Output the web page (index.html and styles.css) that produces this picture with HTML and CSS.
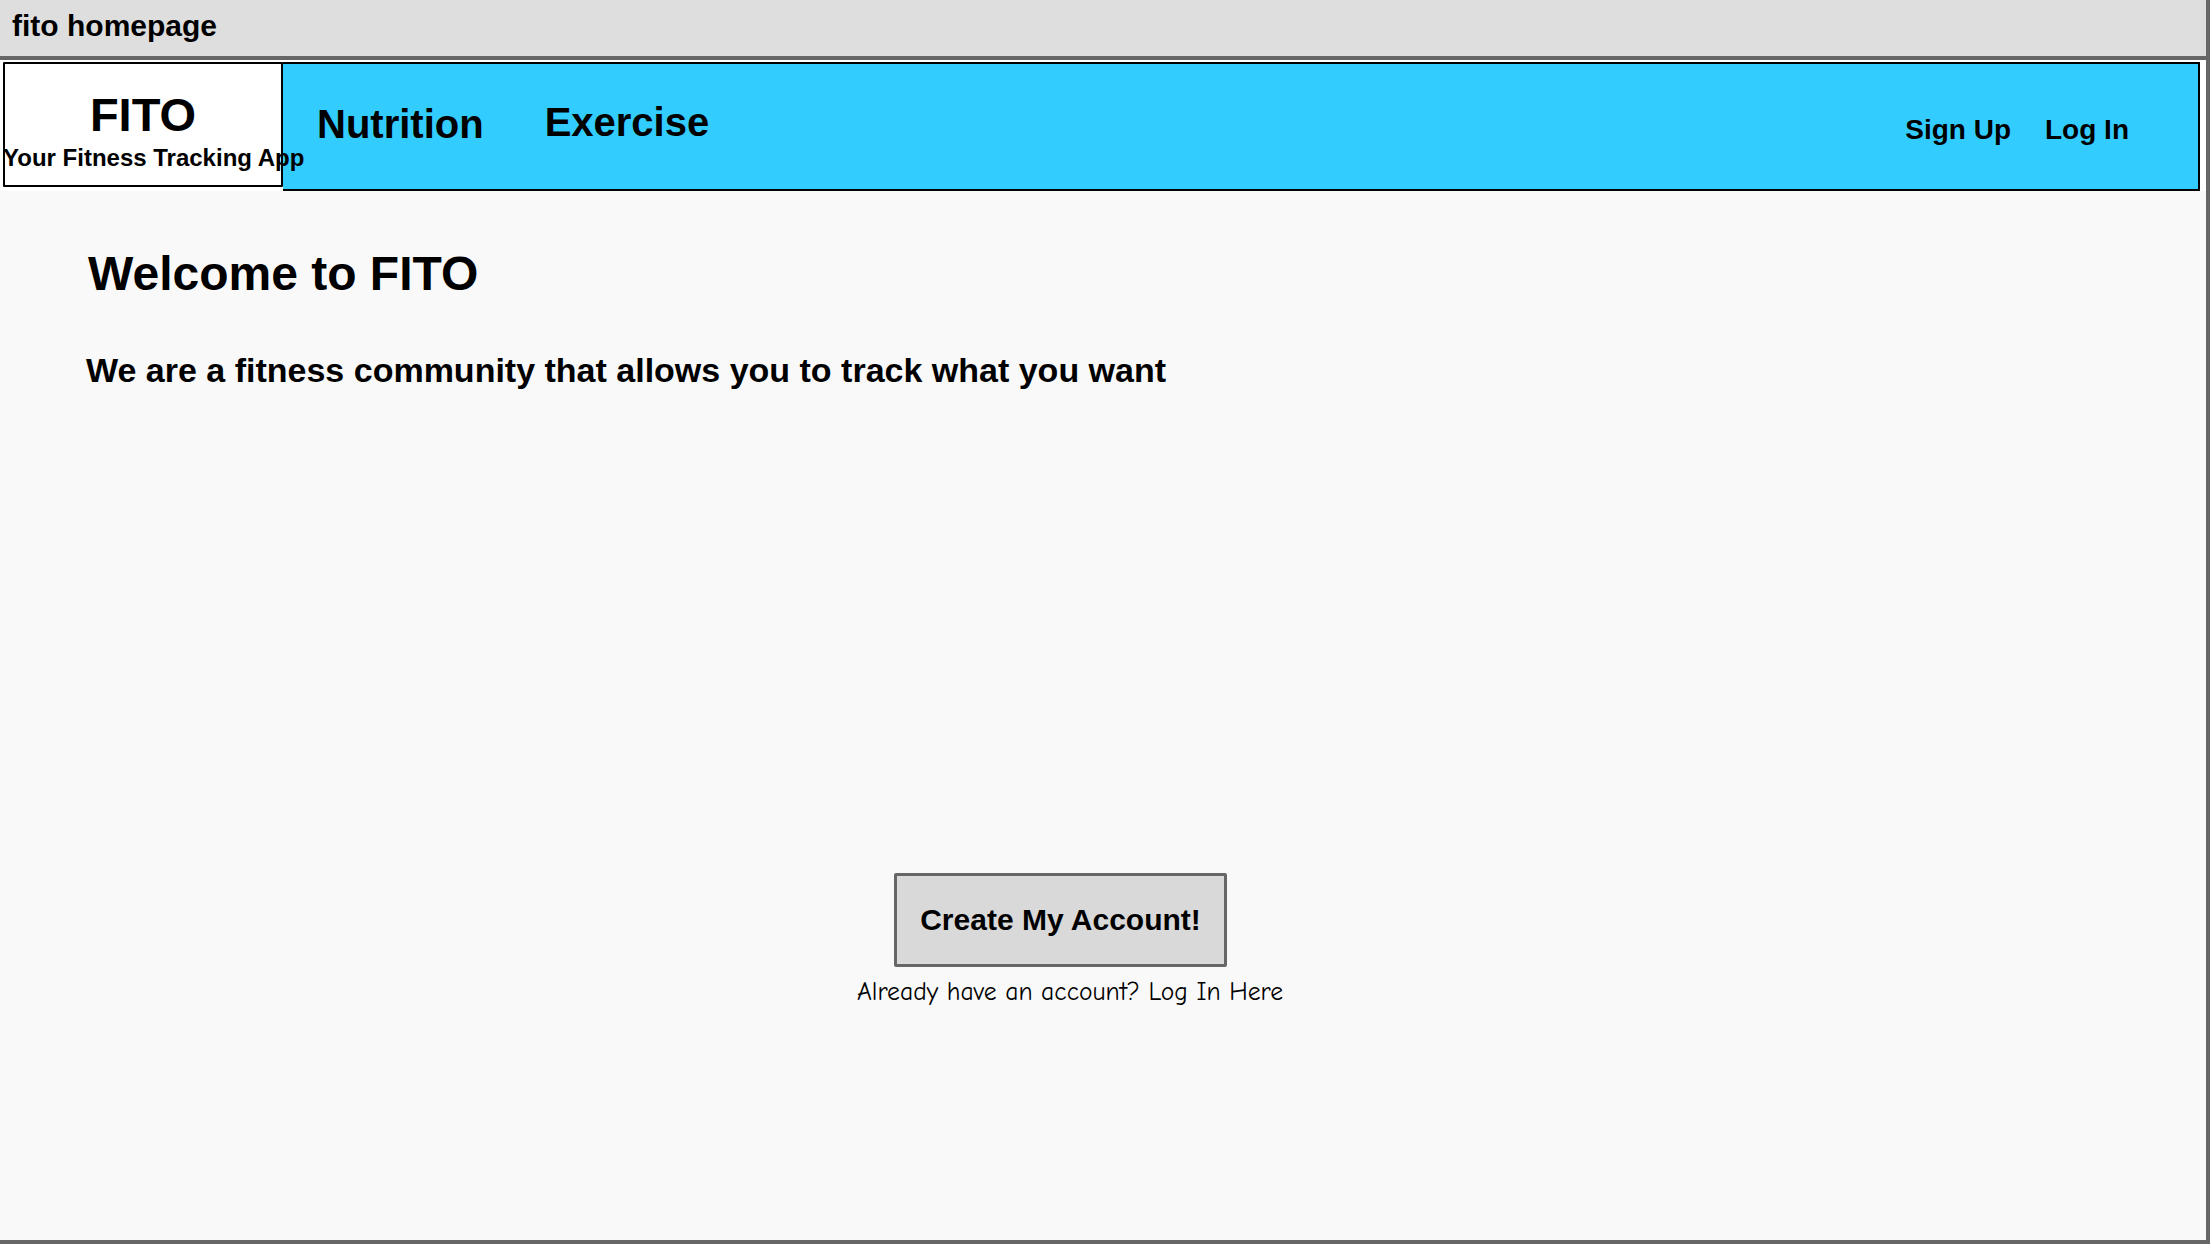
FILE: index.html
```html
<!DOCTYPE html>
<html>
<head>
<meta charset="utf-8">
<title>fito homepage</title>
<link rel="stylesheet" href="styles.css">
</head>
<body>
<div class="window">
  <div class="titlebar">fito homepage</div>
  <div class="header">
    <div class="navbar">
      <div class="logo">
        <div class="logo-title">FITO</div>
        <div class="logo-sub">Your Fitness Tracking App</div>
      </div>
      <div class="navmain">
        <a class="nav-link nutrition">Nutrition</a>
        <a class="nav-link exercise">Exercise</a>
        <div class="nav-right">
          <a class="auth-link">Sign Up</a>
          <a class="auth-link">Log In</a>
        </div>
      </div>
    </div>
  </div>
  <main class="content">
    <h1 class="welcome">Welcome to FITO</h1>
    <h2 class="tagline">We are a fitness community that allows you to track what you want</h2>
    <div class="cta">
      <button class="create-btn">Create My Account!</button>
      <div class="login-hint">Already have an account? Log In Here</div>
    </div>
  </main>
</div>
</body>
</html>
```

FILE: styles.css
```css
html, body {
  margin: 0;
  padding: 0;
  background: #ffffff;
}

body {
  font-family: "Liberation Sans", Arial, sans-serif;
  color: #000;
}

.window {
  width: 2210px;
  height: 1244px;
  box-sizing: border-box;
  border-right: 4px solid #666666;
  border-bottom: 4px solid #666666;
  background: #f9f9f9;
  display: flex;
  flex-direction: column;
  overflow: hidden;
}

.titlebar {
  height: 60px;
  box-sizing: border-box;
  background: #dedede;
  border-bottom: 4px solid #666666;
  padding: 11px 0 0 12px;
  font-size: 30px;
  line-height: 30px;
  font-weight: bold;
}

.header {
  background: #ffffff;
  padding: 2px 0 0 3px;
}

.navbar {
  display: flex;
  width: 2197px;
  height: 129px;
}

.logo {
  width: 280px;
  height: 125px;
  box-sizing: border-box;
  border: 2px solid #000;
  border-radius: 1px;
  background: #ffffff;
  padding-top: 27px;
  position: relative;
  z-index: 1;
}

.logo-title {
  font-size: 47px;
  line-height: 47px;
  font-weight: bold;
  text-align: center;
}

.logo-sub {
  margin: 8px 0 0 -2px;
  font-size: 24px;
  line-height: 24px;
  font-weight: bold;
  white-space: nowrap;
}

.navmain {
  flex: 1;
  display: flex;
  align-items: flex-start;
  background: #33ccff;
  border: 2px solid #000;
  border-left: none;
  padding-right: 69px;
}

.nav-link {
  font-size: 40px;
  line-height: 40px;
  font-weight: bold;
  white-space: nowrap;
}

.nutrition {
  margin: 40px 0 0 34px;
}

.exercise {
  margin: 38px 0 0 61px;
}

.nav-right {
  margin-left: auto;
  margin-top: 52px;
  display: flex;
  gap: 34px;
}

.auth-link {
  font-size: 28px;
  line-height: 28px;
  font-weight: bold;
  white-space: nowrap;
}

.content {
  flex: 1;
  padding-top: 59px;
}

.welcome {
  margin: 0 0 0 88px;
  font-size: 48px;
  line-height: 48px;
  font-weight: bold;
}

.tagline {
  margin: 55px 0 0 86px;
  font-size: 34px;
  line-height: 34px;
  font-weight: bold;
}

.cta {
  width: 2121px;
  margin-top: 486px;
  display: flex;
  flex-direction: column;
  align-items: center;
}

.create-btn {
  width: 333px;
  height: 94px;
  box-sizing: border-box;
  border: 3px solid #666666;
  border-radius: 2px;
  background: #d9d9d9;
  font-family: "Liberation Sans", Arial, sans-serif;
  font-size: 30px;
  line-height: 30px;
  font-weight: bold;
  color: #000;
  padding: 0;
}

.login-hint {
  margin: 12px 0 0 19px;
  font-family: "Comic Sans MS", "Comic Neue", "DejaVu Sans", cursive, sans-serif;
  font-size: 25.6px;
  line-height: 26px;
  white-space: nowrap;
}
```
